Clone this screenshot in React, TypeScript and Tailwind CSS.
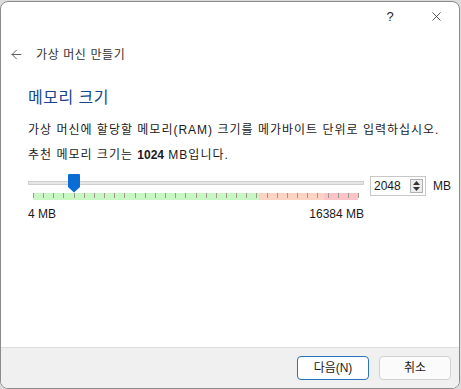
import { ArrowLeft, X } from 'lucide-react';

const FONT = { fontFamily: '"Liberation Sans", "Noto Sans CJK KR", sans-serif' };

const Slider = ({ value, max }: { value: number; max: number }) => {
  const ticks = Array.from({ length: 33 }, (_, i) => i);
  const pct = (value / max) * 100;
  return (
    <div className="relative w-[336px] h-[26px]">
      <div className="absolute left-0 right-0 top-[7px] h-[4px] bg-[#e6e6e6] border border-[#cfcfcf]" />
      <div className="absolute left-[5px] right-[6px] top-[19px] h-[7px] flex">
        <div className="h-full w-[69.5%] bg-[#c9f7c4]" />
        <div className="h-full w-[20%] bg-[#fdd3c4]" />
        <div className="h-full flex-1 bg-[#fcc4c8]" />
        {ticks.map((i) => (
          <div
            key={i}
            className="absolute top-0 w-px h-[5px] bg-[#9a9a8a]"
            style={{ left: `${(i / 32) * 100}%` }}
          />
        ))}
      </div>
      <div className="absolute top-0 left-[5px] right-[6px] h-full">
        <svg
          className="absolute top-0"
          style={{ left: `calc(${pct}% - 6px)` }}
          width="12"
          height="19"
          viewBox="0 0 12 19"
        >
          <path d="M1 0 H11 A1 1 0 0 1 12 1 V13 L6 18.5 L0 13 V1 A1 1 0 0 1 1 0 Z" fill="#0a6cd5" />
        </svg>
      </div>
    </div>
  );
};

const App = () => {
  return (
    <div className="w-[461px] h-[389px] bg-[#dcdcdc] overflow-hidden" style={FONT}>
      <div className="w-[460px] h-[388px] mt-px bg-white border border-[#8c8c8c] rounded-lg overflow-hidden flex flex-col">
        <div className="h-[29px] flex justify-end items-center shrink-0">
          <div className="w-[46px] h-full flex items-center justify-center text-[13px] text-[#222]">?</div>
          <div className="w-[46px] h-full flex items-center justify-center text-[#222]">
            <X size={15} strokeWidth={1.2} />
          </div>
        </div>
        <div className="h-[46px] flex items-center px-[8px] gap-[12px] shrink-0">
          <ArrowLeft size={15} strokeWidth={1.5} className="text-[#555]" />
          <span className="text-[12px] tracking-[0.6px] text-[#333] pt-px">가상 머신 만들기</span>
        </div>
        <div className="pl-[27px] pr-[6px] flex flex-col">
          <div className="mt-[10px] text-[16px] leading-[22px] tracking-[0.5px] text-[#17448c]">메모리 크기</div>
          <div className="mt-[13px] text-[12px] leading-[16px] tracking-[1px] text-[#1a1a1a]">
            가상 머신에 할당할 메모리(RAM) 크기를 메가바이트 단위로 입력하십시오.
          </div>
          <div className="mt-[9px] text-[12px] leading-[16px] tracking-[1px] text-[#1a1a1a]">
            추천 메모리 크기는 <span className="font-bold tracking-normal">1024</span> MB입니다.
          </div>
          <div className="mt-[11px] flex items-start gap-[6px]">
            <div className="flex flex-col shrink-0">
              <Slider value={2048} max={16384} />
              <div className="mt-[7px] flex justify-between text-[12px] leading-[14px] text-[#1a1a1a]">
                <span>4 MB</span>
                <span>16384 MB</span>
              </div>
            </div>
            <div className="shrink-0 mt-[2px] w-[56px] h-[20px] border border-[#c8c8c8] bg-white flex items-center justify-between pl-[3px] pr-[2px]">
              <span className="text-[12px] text-[#1a1a1a]">2048</span>
              <div className="w-[13px] h-[14px] border border-[#b0b0b0] bg-[#ececec] flex flex-col items-center justify-center gap-[2px]">
                <svg width="7" height="4" viewBox="0 0 7 4"><path d="M0 4 L3.5 0 L7 4 Z" fill="#333" /></svg>
                <svg width="7" height="4" viewBox="0 0 7 4"><path d="M0 0 L3.5 4 L7 0 Z" fill="#333" /></svg>
              </div>
            </div>
            <span className="shrink-0 mt-[3px] ml-[1px] text-[12px] text-[#1a1a1a]">MB</span>
          </div>
        </div>
        <div className="flex-1" />
        <div className="h-[41px] shrink-0 border-t border-[#dcdcdc] bg-[#f0f0f0] flex items-center justify-end gap-[10px] pr-[8px]">
          <button className="w-[72px] h-[24px] rounded-[4px] border border-[#2a72bd] bg-white text-[12px] text-[#1a1a1a]">
            다음(N)
          </button>
          <button className="w-[72px] h-[24px] rounded-[4px] border border-[#d0d0d0] bg-[#fbfbfb] text-[12px] text-[#1a1a1a]">
            취소
          </button>
        </div>
      </div>
    </div>
  );
};

export default App;
